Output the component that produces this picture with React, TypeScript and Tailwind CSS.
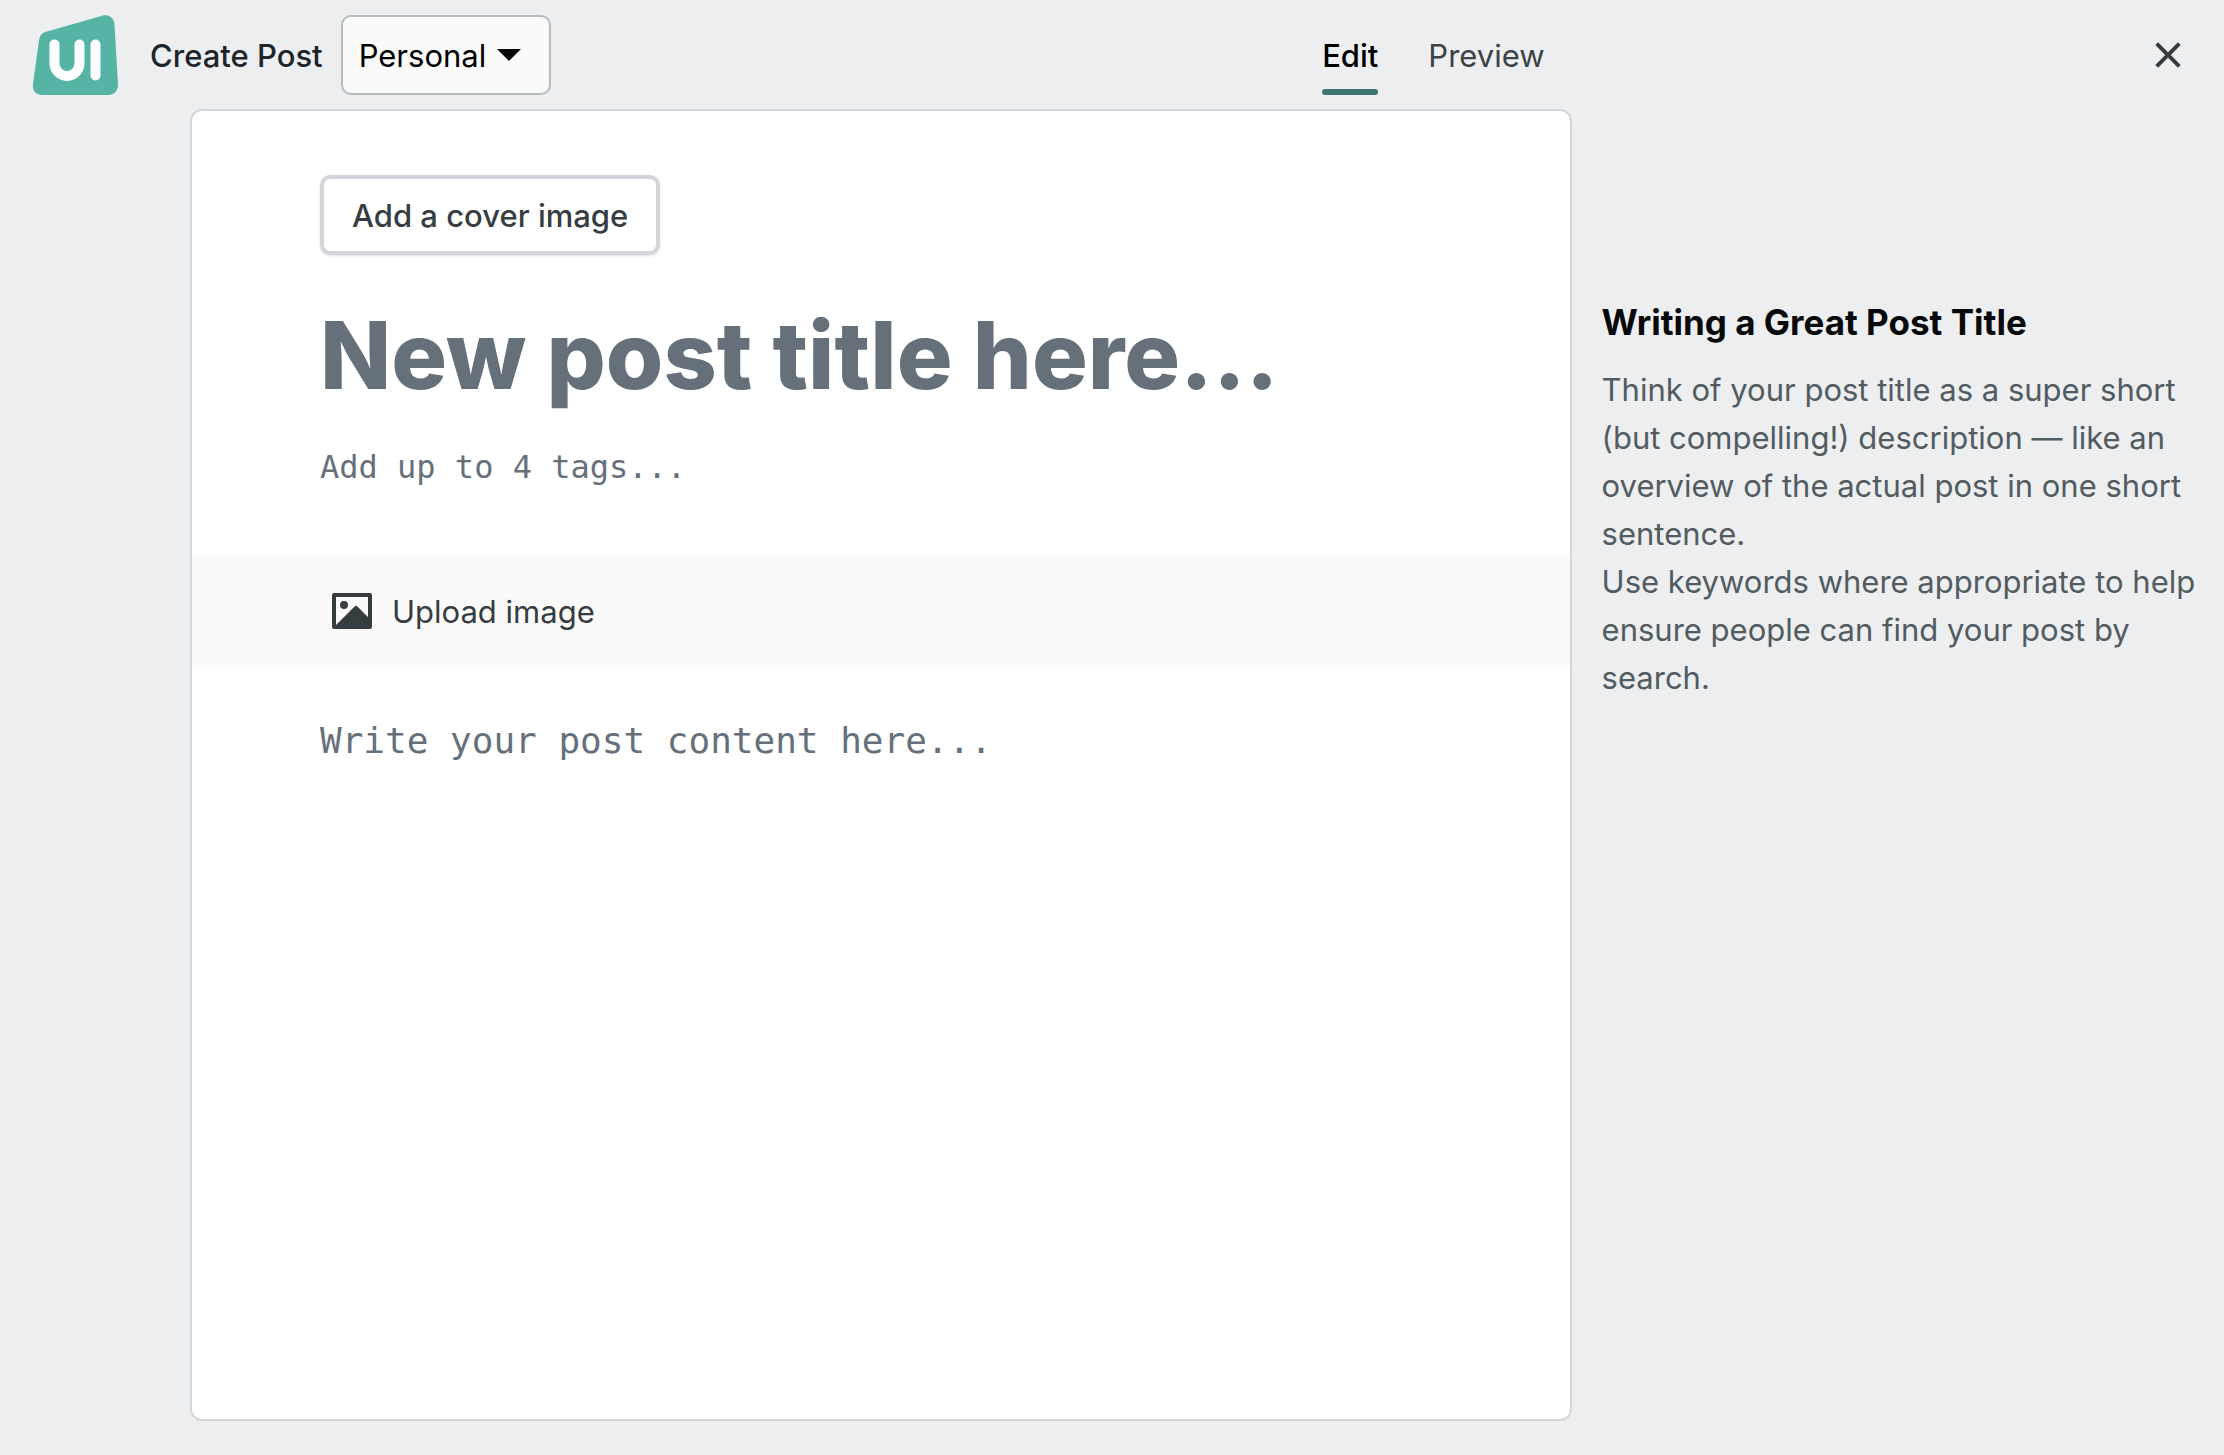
import { useState } from "react";

const Logo = () => (
  <svg width="86" height="80" viewBox="0 0 86 80" aria-hidden="true">
    <path
      d="M15 16.500 71 0.500C77 -1 82 3 82.500 9L86 70C86 76 82 80 76 80H10C4 80 0 76 1 69L7 25C8 20 10 18 15 16.500Z"
      fill="#56b4a5"
    />
    <path
      d="M22.500 29.500V48.500A12.500 12.500 0 0 0 47.500 48.500V29.500"
      fill="none"
      stroke="#fff"
      strokeWidth="10"
      strokeLinecap="round"
    />
    <path d="M63.500 29.500V60.500" stroke="#fff" strokeWidth="10" strokeLinecap="round" />
  </svg>
);

const ImageIcon = () => (
  <svg width="48" height="48" viewBox="0 0 24 24" fill="currentColor" aria-hidden="true">
    <path
      fillRule="evenodd"
      d="M20 5H4v14l9.292-9.294a1 1 0 011.414 0L20 15.010V5zM2 3.993A1 1 0 012.992 3h18.016c.548 0 .992.445.992.993v16.014a1 1 0 01-.992.993H2.992A.993.993 0 012 20.007V3.993zM8 11a2 2 0 110-4 2 2 0 010 4z"
    />
  </svg>
);

const CloseIcon = () => (
  <svg width="48" height="48" viewBox="0 0 24 24" fill="currentColor" aria-hidden="true">
    <path d="M12 10.586l4.950-4.950 1.414 1.414-4.950 4.950 4.950 4.950-1.414 1.414-4.950-4.950-4.950 4.950-1.414-1.414 4.950-4.950-4.950-4.950L7.050 5.636l4.950 4.950z" />
  </svg>
);

const tips = [
  "Think of your post title as a super short (but compelling!) description — like an overview of the actual post in one short sentence.",
  "Use keywords where appropriate to help ensure people can find your post by search.",
];

const App = () => {
  const [tab, setTab] = useState("Edit");
  const [title, setTitle] = useState("");
  const [tags, setTags] = useState("");
  const [content, setContent] = useState("");

  return (
    <div className="flex min-h-screen flex-col bg-[#eceef0] pb-9 font-['Inter',sans-serif] text-[31px] leading-[48px] text-[#202428]">
      {/* Top bar */}
      <header className="grid grid-cols-[7fr_3fr] gap-x-8 pt-[15px] pr-8 pb-4 pl-48">
        <div className="-ml-40 flex items-center">
          <a href="#" aria-label="Home" className="mr-8 shrink-0">
            <Logo />
          </a>
          <label htmlFor="account" className="mr-[18px] pt-0.5 font-medium">
            Create Post
          </label>
          <div className="relative">
            <select
              id="account"
              className="h-20 w-[210px] appearance-none rounded-[10px] border-2 border-[#b5bdc1] bg-[#fafafa] pt-0.5 pl-4 text-black"
            >
              <option>Personal</option>
            </select>
            <svg
              width="24"
              height="12"
              viewBox="0 0 24 12"
              className="pointer-events-none absolute top-[34px] right-[30px]"
              aria-hidden="true"
            >
              <path d="M0 0H24L12 12Z" fill="#08090a" />
            </svg>
          </div>
          <nav className="ml-auto flex">
            {["Edit", "Preview"].map((name) => (
              <button key={name} onClick={() => setTab(name)} className="h-20 px-[25px]">
                <span
                  className={
                    tab === name
                      ? "flex h-20 flex-col justify-between pt-[17px] font-medium text-black"
                      : "flex h-20 flex-col pt-[17px] text-[#3d4246]"
                  }
                >
                  {name}
                  {tab === name && <span className="h-1.5 rounded-full bg-[#3b756c]" />}
                </span>
              </button>
            ))}
          </nav>
        </div>
        <button
          aria-label="Close"
          className="-mr-4 flex size-20 items-center justify-center justify-self-end text-[#363d41]"
        >
          <CloseIcon />
        </button>
      </header>

      <main className="grid grow grid-cols-[7fr_3fr] gap-x-8 pr-8 pl-48">
        {/* Editor */}
        <form className="flex flex-col rounded-[10px] bg-white shadow-[0_0_0_2px_#d4d7d9]">
          <div className="flex flex-col items-start px-32 pt-16 pb-16">
            <button
              type="button"
              className="h-20 rounded-[10px] border-4 border-[#d2d6da] px-7 pt-0.5 font-medium text-[#363d41] shadow-sm"
            >
              Add a cover image
            </button>
            <input
              aria-label="Post title"
              value={title}
              onChange={(e) => setTitle(e.target.value)}
              placeholder="New post title here..."
              className="mt-10 h-[120px] w-full text-[93px] leading-[120px] font-extrabold outline-none placeholder:text-[#66707a]"
            />
            <input
              aria-label="Tags"
              value={tags}
              onChange={(e) => setTags(e.target.value)}
              placeholder="Add up to 4 tags..."
              className="mt-7 h-12 w-full font-['DejaVu_Sans_Mono',monospace] text-[32px] outline-none placeholder:text-[#66707a]"
            />
          </div>
          <div className="flex h-28 items-center bg-[#fafafa] px-32">
            <button type="button" className="flex items-center gap-4 px-2 text-[#363d41]">
              <ImageIcon />
              <span className="pt-0.5">Upload image</span>
            </button>
          </div>
          <textarea
            aria-label="Post content"
            value={content}
            onChange={(e) => setContent(e.target.value)}
            placeholder="Write your post content here..."
            className="grow resize-none px-32 pt-[49px] font-['DejaVu_Sans_Mono',monospace] text-[36px] leading-[50px] outline-none placeholder:text-[#66707a]"
          />
        </form>

        {/* Writing tips */}
        <aside className="-mr-4 pt-[189px] text-[#525c60]">
          <h2 className="mb-[22px] text-[35px] leading-[44px] font-bold text-[#08090a]">
            Writing a Great Post Title
          </h2>
          {tips.map((tip) => (
            <p key={tip}>{tip}</p>
          ))}
        </aside>
      </main>
    </div>
  );
};

export default App;
